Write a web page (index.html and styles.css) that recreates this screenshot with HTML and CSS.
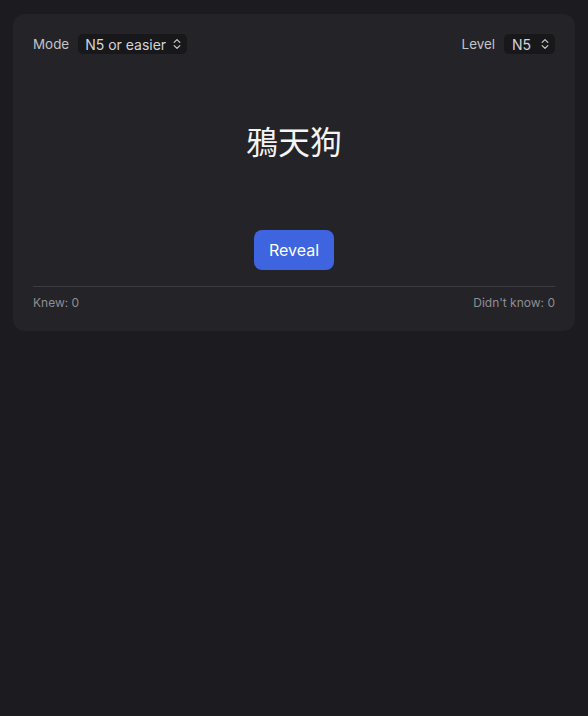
FILE: index.html
```html
<!DOCTYPE html>
<html lang="ja">
<head>
<meta charset="utf-8">
<title>Kanji</title>
<link rel="stylesheet" href="styles.css">
</head>
<body>
<main class="card">
  <div class="toolbar">
    <label class="field">
      <span class="field-label">Mode</span>
      <span class="select select-mode">N5 or easier
        <svg class="chev" viewBox="0 0 8 12" width="8" height="12"><path d="M1.2 4.4 4 1.6l2.8 2.8M1.2 7.6 4 10.4l2.8-2.8" fill="none" stroke="currentColor" stroke-width="1.3" stroke-linecap="round" stroke-linejoin="round"/></svg>
      </span>
    </label>
    <label class="field">
      <span class="field-label">Level</span>
      <span class="select select-level">N5
        <svg class="chev" viewBox="0 0 8 12" width="8" height="12"><path d="M1.2 4.4 4 1.6l2.8 2.8M1.2 7.6 4 10.4l2.8-2.8" fill="none" stroke="currentColor" stroke-width="1.3" stroke-linecap="round" stroke-linejoin="round"/></svg>
      </span>
    </label>
  </div>
  <div class="word">鴉天狗</div>
  <div class="actions"><button class="btn">Reveal</button></div>
  <div class="stats">
    <span>Knew: 0</span>
    <span>Didn't know: 0</span>
  </div>
</main>
</body>
</html>
```
FILE: styles.css
```css
html, body { margin: 0; }
body {
  background: #1c1c20;
  padding: 14px 13px 0 13px;
  font-family: Inter, "Noto Sans", "Noto Sans CJK JP", sans-serif;
  color: #e4e4e7;
  min-height: 716px;
  box-sizing: border-box;
}
.card {
  background: #232328;
  border-radius: 12px;
  padding: 20px 20px 20px 20px;
}
.toolbar {
  display: flex;
  justify-content: space-between;
  align-items: center;
  height: 20px;
}
.field { display: flex; align-items: center; gap: 9px; }
.field-label { font-size: 13.4px; color: #c4c4c9; }
.select {
  display: flex;
  align-items: center;
  justify-content: space-between;
  box-sizing: border-box;
  height: 20px;
  padding: 0 6px 0 7px;
  background: #18181b;
  border-radius: 5px;
  font-size: 14px;
  color: #d4d4d8;
}
.select-mode { width: 109px; }
.select-level { width: 51px; padding-left: 8px; }
.chev { color: #c4c4c9; display: block; }
.word {
  margin-top: 62px;
  text-align: center;
  font-family: "Noto Sans CJK JP", sans-serif;
  font-size: 32px;
  line-height: 48px;
  color: #f4f4f5;
}
.actions { display: flex; justify-content: center; margin-top: 66px; }
.btn {
  width: 80px;
  height: 40px;
  border: 0;
  border-radius: 8px;
  background: #3e64e0;
  color: #fff;
  font-family: Inter, sans-serif;
  font-size: 16px;
  padding: 0;
}
.stats {
  margin-top: 16px;
  border-top: 1px solid #3c3c42;
  padding-top: 8px;
  display: flex;
  justify-content: space-between;
  font-size: 12px;
  line-height: 16px;
  color: #8e8e94;
}
```
